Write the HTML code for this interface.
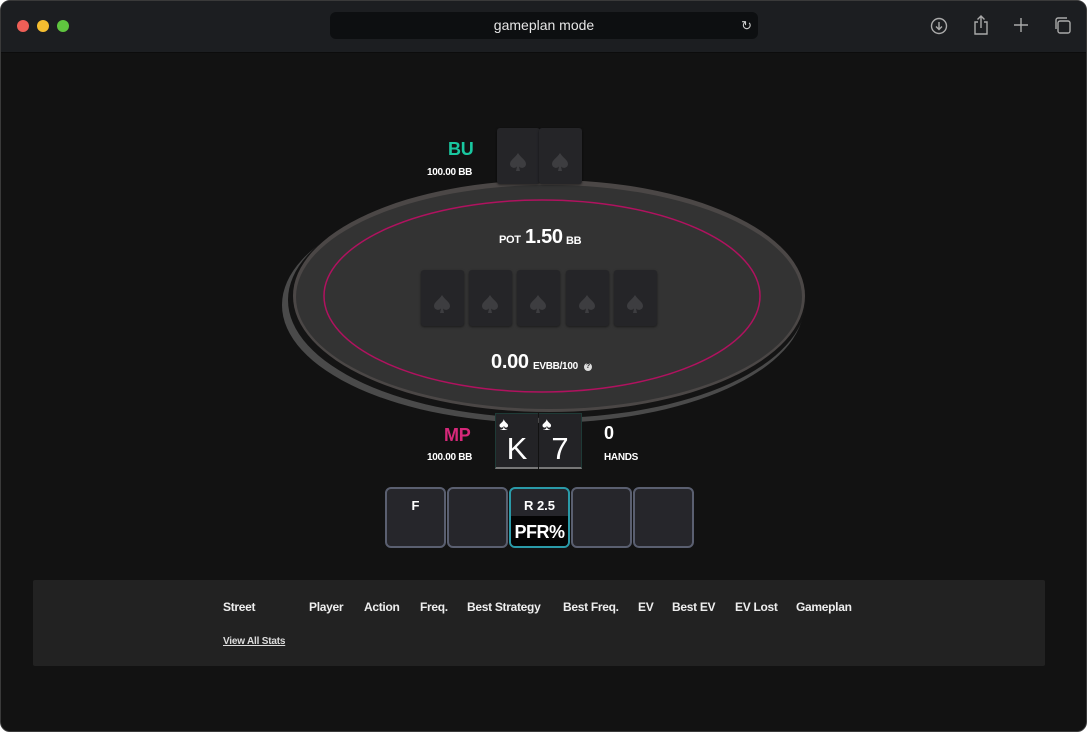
<!DOCTYPE html>
<html><head><style>
*{margin:0;padding:0;box-sizing:border-box}
body{width:1087px;height:732px;background:#fff;font-family:"Liberation Sans",sans-serif;overflow:hidden}
.win{position:absolute;left:0;top:0;width:1087px;height:732px;background:#121212;border-radius:10px;border:1px solid #3a3a3a;overflow:hidden}
.bar{position:absolute;left:-1px;top:-1px;width:1087px;height:53px;background:#1c1e21;border-bottom:1px solid #0c0c0c}
.dot{position:absolute;top:20px;width:12px;height:12px;border-radius:50%}
.url{position:absolute;left:330px;top:12px;width:428px;height:27px;background:#0d0f11;border-radius:6px;color:#e6e6e6;font-size:14px;text-align:center;line-height:27px}
.card{position:absolute;width:43px;height:56px;background:#252528;border-radius:3px;box-shadow:0 1px 2px rgba(0,0,0,.5)}
.card svg{position:absolute;left:12px;top:24px}
.t{position:absolute;color:#fff;font-weight:bold;letter-spacing:-0.3px}
.btn{position:absolute;top:487px;width:61px;height:61px;background:#26262b;border:2px solid #5a5f70;border-radius:6px;color:#fff;font-weight:bold;text-align:center;font-size:13px;overflow:hidden}
.hc{position:absolute;top:413px;width:43px;height:56px;background:#232326;border-bottom:2px solid #777;color:#fff;font-size:31px;text-align:center}
.st{position:absolute;top:599px;color:#eee;font-size:12px;font-weight:bold;letter-spacing:-0.3px}
</style></head><body>
<div class="win">
<div class="bar">
<div class="dot" style="left:17px;background:#ee5f57"></div>
<div class="dot" style="left:37px;background:#f5be30"></div>
<div class="dot" style="left:57px;background:#5fc53f"></div>
<div class="url">gameplan mode<span style="position:absolute;right:6px;top:0;font-size:13px;color:#ccc">↻</span></div>
<svg style="position:absolute;left:930px;top:17px" width="18" height="18" viewBox="0 0 18 18" fill="none" stroke="#aaa" stroke-width="1.4"><circle cx="9" cy="9" r="7.5"/><path d="M9 5v7M6 9.5l3 3 3-3"/></svg>
<svg style="position:absolute;left:972px;top:14px" width="18" height="22" viewBox="0 0 18 22" fill="none" stroke="#aaa" stroke-width="1.4"><path d="M6 8H3v12h12V8h-3M9 2v12M5.5 5.5 9 2l3.5 3.5"/></svg>
<svg style="position:absolute;left:1013px;top:17px" width="16" height="16" viewBox="0 0 16 16" stroke="#aaa" stroke-width="1.4"><path d="M8 1v14M1 8h14"/></svg>
<svg style="position:absolute;left:1053px;top:16px" width="19" height="19" viewBox="0 0 19 19" fill="none" stroke="#aaa" stroke-width="1.4"><rect x="5" y="5" width="12" height="12" rx="2"/><path d="M3 13V4a2 2 0 0 1 2-2h9"/></svg>
</div>
<svg style="position:absolute;left:-1px;top:-1px" width="1087" height="732">
<ellipse cx="543" cy="305" rx="261" ry="118" fill="#4a4a4a"/>
<ellipse cx="547" cy="300" rx="259" ry="118" fill="#141414"/>
<ellipse cx="549" cy="296" rx="256" ry="116" fill="#4b4746"/>
<ellipse cx="549" cy="297" rx="253" ry="112" fill="#333333"/>
<ellipse cx="542" cy="296" rx="218" ry="96" fill="none" stroke="#b0125f" stroke-width="1.5"/>
</svg>
<div class="t" style="left:447px;top:138px;color:#19c7a0;font-size:18px">BU</div>
<div class="t" style="left:426px;top:166px;font-size:10px">100.00 BB</div>
<div class="card" style="left:496px;top:127px"><svg width="18" height="20" viewBox="0 0 18 20"><path d="M9 1C6 6 1 8 1 12a4 4 0 0 0 7 2.5L7 19h4l-1-4.5A4 4 0 0 0 17 12c0-4-5-6-8-11z" fill="#3d3d40"/></svg></div>
<div class="card" style="left:538px;top:127px"><svg width="18" height="20" viewBox="0 0 18 20"><path d="M9 1C6 6 1 8 1 12a4 4 0 0 0 7 2.5L7 19h4l-1-4.5A4 4 0 0 0 17 12c0-4-5-6-8-11z" fill="#3d3d40"/></svg></div>
<div class="t" style="left:498px;top:233px;font-size:11px">POT</div>
<div class="t" style="left:524px;top:225px;font-size:20px">1.50</div>
<div class="t" style="left:565px;top:234px;font-size:11px">BB</div>
<div class="card" style="left:420px;top:269px"><svg width="18" height="20" viewBox="0 0 18 20"><path d="M9 1C6 6 1 8 1 12a4 4 0 0 0 7 2.5L7 19h4l-1-4.5A4 4 0 0 0 17 12c0-4-5-6-8-11z" fill="#3d3d40"/></svg></div>
<div class="card" style="left:468px;top:269px"><svg width="18" height="20" viewBox="0 0 18 20"><path d="M9 1C6 6 1 8 1 12a4 4 0 0 0 7 2.5L7 19h4l-1-4.5A4 4 0 0 0 17 12c0-4-5-6-8-11z" fill="#3d3d40"/></svg></div>
<div class="card" style="left:516px;top:269px"><svg width="18" height="20" viewBox="0 0 18 20"><path d="M9 1C6 6 1 8 1 12a4 4 0 0 0 7 2.5L7 19h4l-1-4.5A4 4 0 0 0 17 12c0-4-5-6-8-11z" fill="#3d3d40"/></svg></div>
<div class="card" style="left:565px;top:269px"><svg width="18" height="20" viewBox="0 0 18 20"><path d="M9 1C6 6 1 8 1 12a4 4 0 0 0 7 2.5L7 19h4l-1-4.5A4 4 0 0 0 17 12c0-4-5-6-8-11z" fill="#3d3d40"/></svg></div>
<div class="card" style="left:613px;top:269px"><svg width="18" height="20" viewBox="0 0 18 20"><path d="M9 1C6 6 1 8 1 12a4 4 0 0 0 7 2.5L7 19h4l-1-4.5A4 4 0 0 0 17 12c0-4-5-6-8-11z" fill="#3d3d40"/></svg></div>
<div class="t" style="left:490px;top:350px;font-size:20px">0.00</div>
<div class="t" style="left:532px;top:360px;font-size:10px">EVBB/100</div>
<div style="position:absolute;left:583px;top:362px;width:8px;height:8px;border-radius:50%;background:#ddd;color:#222;font-size:7px;font-weight:bold;text-align:center;line-height:8px">?</div>
<div class="t" style="left:443px;top:424px;color:#d6287a;font-size:18px">MP</div>
<div class="t" style="left:426px;top:451px;font-size:10px">100.00 BB</div>
<div class="hc" style="left:494px;top:412px;border-left:1px solid #1e3a36;border-top:1px solid #1e3a36"><span style="position:absolute;left:3px;top:0;font-size:18px">♠</span><span style="position:absolute;left:0;right:0;top:17px;line-height:36px">K</span></div>
<div class="hc" style="left:538px;top:412px;border-right:1px solid #1e3a36;border-top:1px solid #1e3a36"><span style="position:absolute;left:3px;top:0;font-size:18px">♠</span><span style="position:absolute;left:0;right:0;top:17px;line-height:36px">7</span></div>
<div class="t" style="left:603px;top:422px;font-size:18px">0</div>
<div class="t" style="left:603px;top:451px;font-size:10px">HANDS</div>
<div class="btn" style="left:384px;top:486px"><div style="margin-top:9px">F</div></div>
<div class="btn" style="left:446px;top:486px"></div>
<div class="btn" style="left:508px;top:486px;border-color:#2a9aa8"><div style="margin-top:9px">R 2.5</div><div style="position:absolute;left:0;right:0;top:27px;height:32px;background:#050505;font-size:18px;line-height:32px;letter-spacing:-0.5px">PFR%</div></div>
<div class="btn" style="left:570px;top:486px"></div>
<div class="btn" style="left:632px;top:486px"></div>
<div style="position:absolute;left:32px;top:579px;width:1012px;height:86px;background:#222222;border-radius:2px"></div>
<div class="st" style="left:222px">Street</div>
<div class="st" style="left:308px">Player</div>
<div class="st" style="left:363px">Action</div>
<div class="st" style="left:419px">Freq.</div>
<div class="st" style="left:466px">Best Strategy</div>
<div class="st" style="left:562px">Best Freq.</div>
<div class="st" style="left:637px">EV</div>
<div class="st" style="left:671px">Best EV</div>
<div class="st" style="left:734px">EV Lost</div>
<div class="st" style="left:795px">Gameplan</div>
<div style="position:absolute;left:222px;top:635px;color:#ddd;font-size:10px;font-weight:bold;text-decoration:underline;letter-spacing:-0.2px">View All Stats</div>
</div>
</body></html>
